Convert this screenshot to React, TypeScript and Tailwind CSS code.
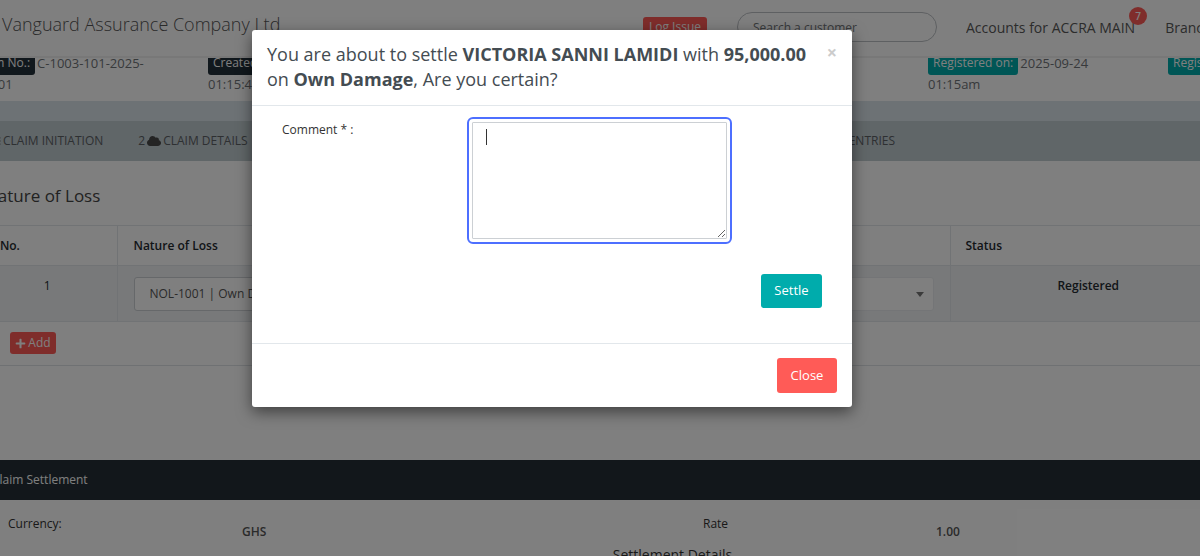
import { FaBars, FaCloud, FaPlus } from 'react-icons/fa';

const claimFacts = [
  { label: 'Claim No.:', first: 'C-1003-101-2025-', second: '000001', style: 'bg-[#23303a]', cell: 'col-start-1' },
  { label: 'Created on:', first: '', second: '01:15:48', style: 'bg-[#23303a]', cell: 'col-start-2' },
  { label: 'Registered on:', first: '2025-09-24', second: '01:15am', style: 'bg-[#00acac]', cell: 'col-start-5' },
  { label: 'Registered by:', first: '', second: '', style: 'bg-[#00acac]', cell: 'col-start-6' },
];

function TopBar() {
  return (
    <header className="relative z-10 flex h-14 items-center bg-white pb-0.5 shadow-[0_2px_0_#f0f0f0]">
      <h1 className="ml-0.5 flex-1 whitespace-nowrap pb-1.5 text-[18px] font-light text-[#555]">
        Vanguard Assurance Company Ltd
      </h1>
      <button className="mr-[30px] h-5 w-16 rounded-[3px] bg-[#ff5b57] text-[12px] leading-5 text-white">Log Issue</button>
      <input
        type="search"
        aria-label="Search a customer"
        placeholder="Search a customer"
        className="mr-[29px] h-[30px] w-[200px] rounded-full border border-[#bcc0c4] px-[15px] text-[12px] placeholder:text-[#707478]"
      />
      <div className="flex w-[234px] gap-[30px] overflow-hidden whitespace-nowrap text-[14px] text-[#585858]">
        <a href="#accounts" className="relative py-3">
          Accounts for ACCRA MAIN
          <span className="absolute right-[-12px] top-0.5 h-[18px] w-[18px] rounded-full bg-[#ff5b57] text-center text-[10px] font-semibold leading-[18px] text-white">
            7
          </span>
        </a>
        <a href="#branch" className="py-3">Branch</a>
      </div>
    </header>
  );
}

function ClaimInfo() {
  return (
    <>
      <div className="-mt-1 -ml-8 grid h-[49px] w-[120%] grid-cols-6 text-[13px] leading-[21px] text-[#707478]">
        {claimFacts.map(fact => (
          <div key={fact.label} className={`whitespace-nowrap ${fact.cell}`}>
            <div className="flex items-start gap-0.5">
              <span className={`h-[23px] rounded-[3px] px-[5px] text-[12px] leading-[22px] text-white ${fact.style}`}>{fact.label}</span>
              <span className="leading-[22px]">{fact.first}</span>
            </div>
            <div className="leading-[19px]">{fact.second}</div>
          </div>
        ))}
      </div>
      <div className="h-5 bg-[#dae4ea]" />
      <nav className="flex h-10 items-center whitespace-nowrap bg-[#c0ccd1] text-[12px] text-[#5c6064]">
        <a href="#initiation" className="-ml-[9px] flex flex-none items-center gap-0.5">
          <FaBars size={10} />
          CLAIM INITIATION
        </a>
        <a href="#details" className="ml-[35px] flex flex-1 items-center gap-0.5">
          2 <FaCloud size={14} color="#484848" /> CLAIM DETAILS
        </a>
        <a href="#entries" className="mr-[305px]">ENTRIES</a>
      </nav>
    </>
  );
}

function LossTable() {
  const select = 'h-[34px] w-full appearance-none rounded-[3px] border bg-white px-[15px] text-[12px] text-[#555]';
  return (
    <section className="border-b border-[#dfe3e6] pb-[11px]">
      <h2 className="-ml-[15px] pb-[19px] pt-[25px] text-[17px] leading-5 text-[#444]">Nature of Loss</h2>
      <table className="-ml-[22px] w-[calc(100%+48px)] table-fixed border-collapse text-[12px] text-[#242a30]">
        <thead>
          <tr className="h-10 border-y border-[#e2e7eb] text-left">
            <th className="w-[139px] border-r border-[#e2e7eb] pl-3 font-semibold">S.No.</th>
            <th className="w-[416px] border-r border-[#e2e7eb] px-4 font-semibold">Nature of Loss</th>
            <th className="border-r border-[#e2e7eb] px-4 font-semibold" />
            <th className="w-[276px] px-[15px] font-semibold">Status</th>
          </tr>
        </thead>
        <tbody>
          <tr className="h-14 border-b border-[#e2e7eb] bg-[#f0f3f5]">
            <td className="border-r border-[#e2e7eb] pb-4 text-center">1</td>
            <td className="border-r border-[#e2e7eb] px-4">
              <select aria-label="Nature of loss" className={`${select} border-[#ccd0d4]`}>
                <option>NOL-1001 | Own Damage</option>
              </select>
            </td>
            <td className="border-r border-[#e2e7eb] px-4">
              <div className="relative">
                <select aria-label="Loss type" className={`${select} border-[#e8ebee]`} />
                <span className="absolute right-2.5 top-[15px] border-x-4 border-t-[5px] border-x-transparent border-t-[#777]" />
              </div>
            </td>
            <td className="pb-4 text-center font-semibold">Registered</td>
          </tr>
        </tbody>
      </table>
      <button className="ml-2.5 mt-2.5 flex h-[22px] w-[46px] items-center justify-center gap-0.5 rounded-[3px] bg-[#ff5b57] text-[12px] text-white">
        <FaPlus size={11} />
        Add
      </button>
    </section>
  );
}

function Settlement() {
  return (
    <section className="mt-[94px] text-[12px] text-[#333]">
      <h2 className="-ml-2 h-10 bg-[#242f36] leading-10 text-white">Claim Settlement</h2>
      <div className="grid h-[45px] grid-cols-[234px_461px_233px_1fr] pl-2 leading-4">
        <span className="pt-4">Currency:</span>
        <b className="pt-6 font-semibold text-[#555]">GHS</b>
        <span className="pt-4">Rate</span>
        <b className="pt-6 font-semibold text-[#555]">1.00</b>
      </div>
      <h3 className="pl-[145px] text-center text-[14px] leading-5">Settlement Details</h3>
    </section>
  );
}

function SettleDialog() {
  return (
    <div className="absolute inset-0 z-20 flex items-start justify-center bg-black/50 pr-24 pt-[30px]">
      <div role="dialog" aria-modal="true" aria-labelledby="settle-title" className="w-[600px] rounded-[3px] bg-white shadow-[0_5px_15px_rgba(0,0,0,0.5)]">
        <div className="flex items-start justify-between border-b border-[#e2e7eb] px-[15px] pb-[13px] pt-3">
          <h2 id="settle-title" className="text-[18px] leading-[25px] text-[#444c52]">
            You are about to settle <b>VICTORIA SANNI LAMIDI</b> with <b>95,000.00</b>
            <br />
            on <b>Own Damage</b>, Are you certain?
          </h2>
          <button aria-label="Dismiss" className="text-[18px] font-bold leading-5 text-[#ccc]">×</button>
        </div>
        <div className="flex h-[237px] flex-col px-[30px] pt-4">
          <div className="flex items-start">
            <label htmlFor="comment" className="w-[190px] text-[12px] leading-4 text-[#333]">Comment * :</label>
            <div className="relative">
              <textarea
                id="comment"
                className="block h-[117px] w-[255px] rounded-[1px] border border-[#ccd0d4] px-3 py-1.5 text-[12px] caret-transparent outline-2 outline-offset-[3px] outline-[#4d6fff]"
              />
              <span className="absolute left-3.5 top-[7px] h-4 w-px bg-[#333]" />
            </div>
          </div>
          <button className="mt-[35px] h-[34px] w-[61px] self-end rounded-[3px] bg-[#00acac] text-[13px] text-white">Settle</button>
        </div>
        <div className="flex justify-end border-t border-[#e2e7eb] px-[15px] py-3.5">
          <button className="h-[35px] w-[60px] rounded-[3px] bg-[#ff5b57] text-[13px] text-white">Close</button>
        </div>
      </div>
    </div>
  );
}

export default function App() {
  return (
    <div className="relative h-screen overflow-hidden bg-white font-['Open_Sans',sans-serif]">
      <TopBar />
      <ClaimInfo />
      <LossTable />
      <Settlement />
      <SettleDialog />
    </div>
  );
}
